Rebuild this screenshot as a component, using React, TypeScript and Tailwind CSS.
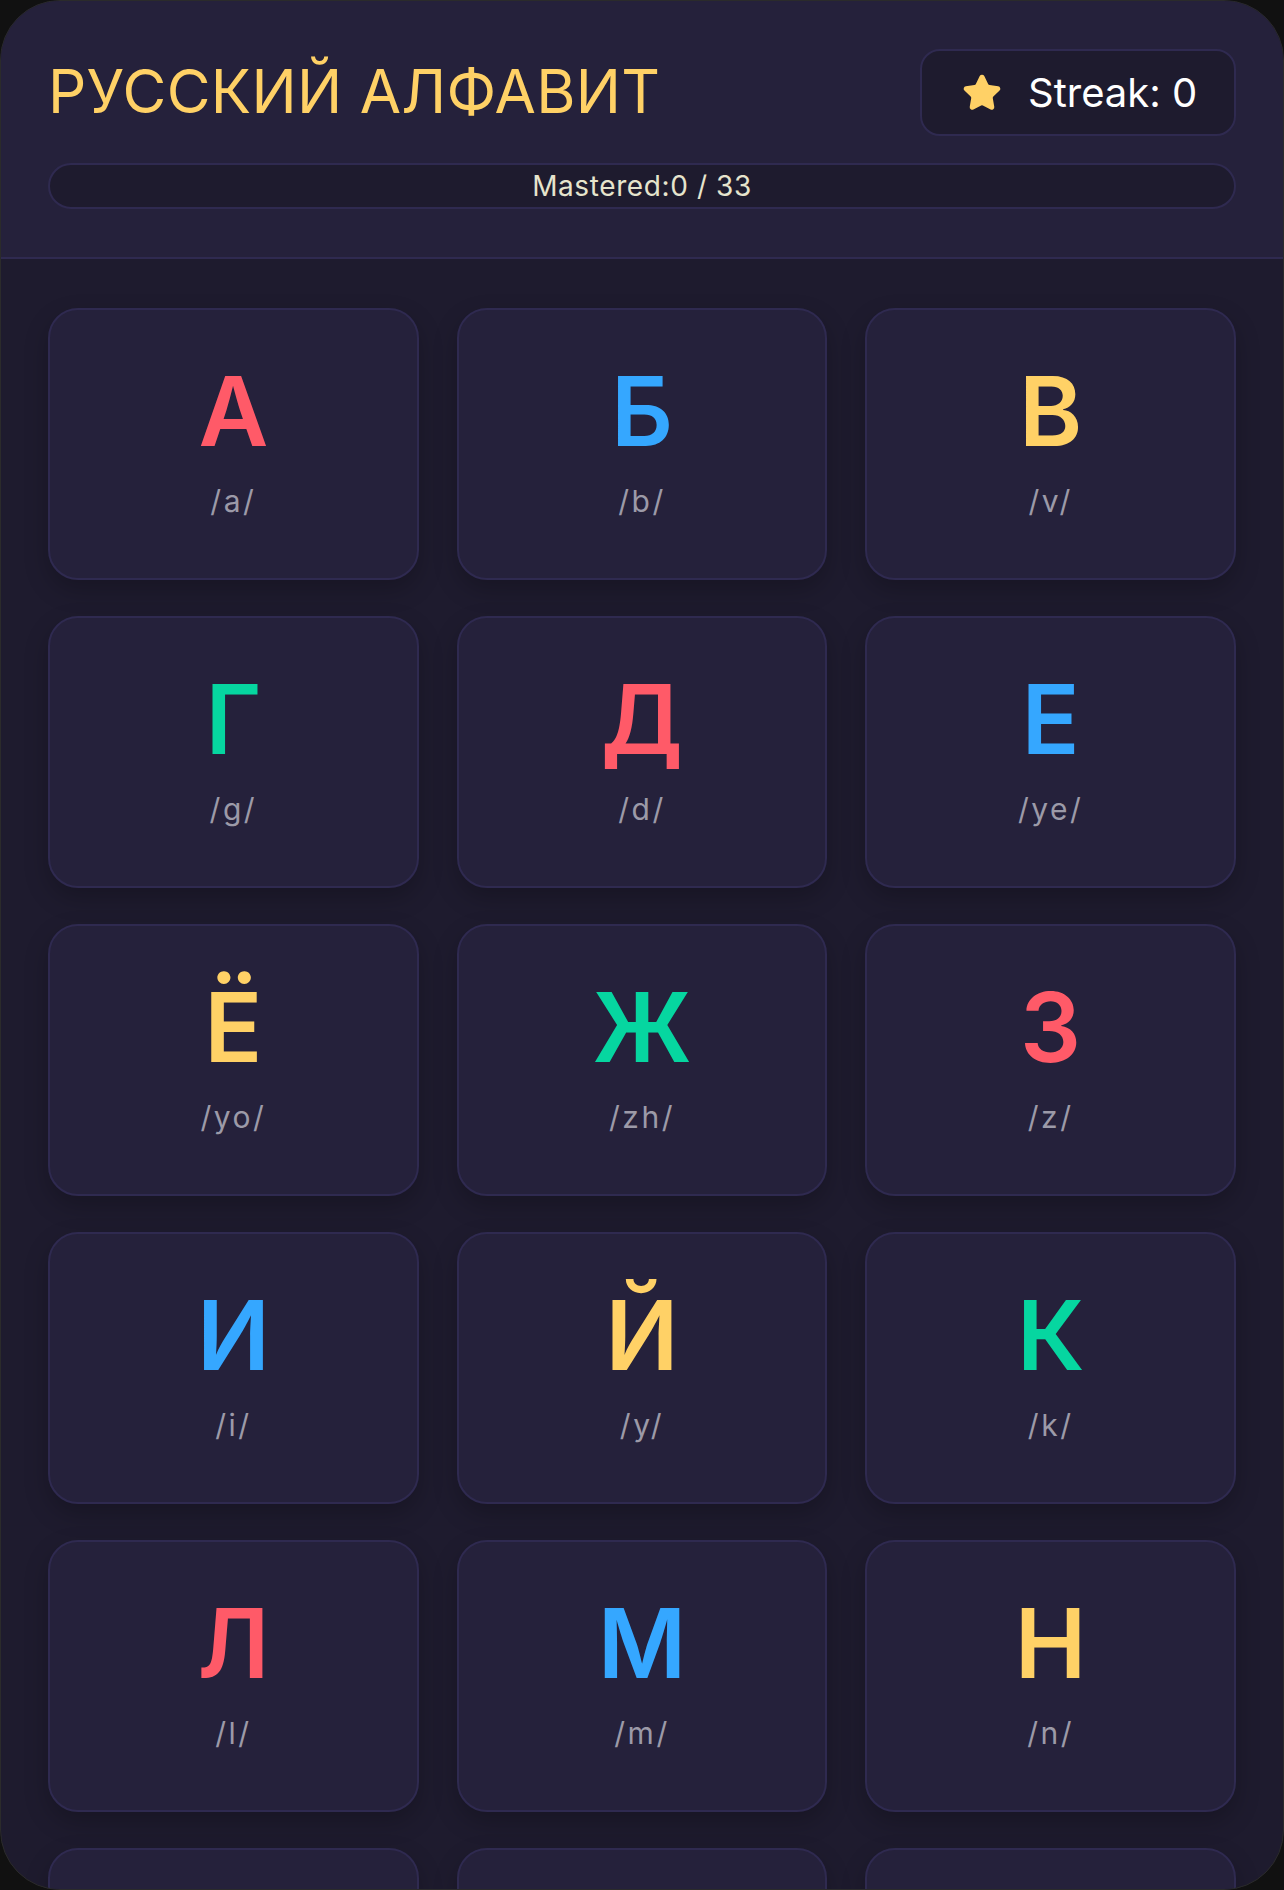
import React from "react";

const letters: [string, string][] = [
  ["А", "a"], ["Б", "b"], ["В", "v"], ["Г", "g"], ["Д", "d"], ["Е", "ye"],
  ["Ё", "yo"], ["Ж", "zh"], ["З", "z"], ["И", "i"], ["Й", "y"], ["К", "k"],
  ["Л", "l"], ["М", "m"], ["Н", "n"], ["О", "o"], ["П", "p"], ["Р", "r"],
  ["С", "s"], ["Т", "t"], ["У", "u"], ["Ф", "f"], ["Х", "kh"], ["Ц", "ts"],
  ["Ч", "ch"], ["Ш", "sh"], ["Щ", "shch"], ["Ъ", "-"], ["Ы", "y"], ["Ь", "'"],
  ["Э", "e"], ["Ю", "yu"], ["Я", "ya"],
];

const colors = ["text-[#ff5a68]", "text-[#35a7ff]", "text-[#ffd166]", "text-[#06d6a0]"];

function Star() {
  return (
    <svg width="40" height="40" viewBox="0 0 24 24" fill="#ffd166" stroke="#ffd166" strokeWidth="2" strokeLinejoin="round" strokeLinecap="round">
      <path d="M11.525 2.295a.53.53 0 0 1 .95 0l2.31 4.679a2.123 2.123 0 0 0 1.595 1.16l5.166.756a.53.53 0 0 1 .294.904l-3.736 3.638a2.123 2.123 0 0 0-.611 1.878l.882 5.14a.53.53 0 0 1-.771.56l-4.618-2.428a2.122 2.122 0 0 0-1.973 0L6.396 21.01a.53.53 0 0 1-.77-.56l.881-5.139a2.122 2.122 0 0 0-.611-1.879L2.16 9.795a.53.53 0 0 1 .294-.906l5.165-.755a2.122 2.122 0 0 0 1.597-1.16z" />
    </svg>
  );
}

export default function App() {
  return (
    <div className="w-[1284px] h-[1890px] bg-[#111111] overflow-hidden font-['Inter','Noto_Sans',sans-serif]">
      <div className="h-full rounded-[60px] border border-[#2b2b2b] bg-[#1e1b2e] overflow-hidden">
        <header className="bg-[#25213b] border-b-2 border-[#2f2a50] px-[47px] pt-[48px] pb-[48px]">
          <div className="flex items-center justify-between h-[87px]">
            <h1 className="text-[60px] leading-none font-normal text-[#ffd166] tracking-[0.3px] mt-[-4px]">
              РУССКИЙ АЛФАВИТ
            </h1>
            <div className="h-[87px] w-[316px] shrink-0 flex items-center gap-[26px] pl-[40px] rounded-[20px] border-2 border-[#2f2a50] bg-[#1e1b2e]">
              <Star />
              <span className="text-[40px] leading-none text-white">Streak: 0</span>
            </div>
          </div>
          <div className="mt-[27px] h-[46px] rounded-full border-2 border-[#2f2a50] bg-[#1e1b2e] flex items-center justify-center">
            <span className="text-[28px] leading-none text-[#e6e4cd] tracking-[0.6px]">Mastered:0 / 33</span>
          </div>
        </header>
        <main className="px-[47px] pt-[49px] grid grid-cols-3 gap-x-[38px] gap-y-[36px]">
          {letters.map(([l, p], i) => (
            <div
              key={i}
              className="h-[272px] rounded-[30px] border-2 border-[#2f2a50] bg-[#25213b] shadow-[0_10px_24px_rgba(0,0,0,0.22)] flex flex-col items-center justify-center pb-[6px]"
            >
              <div className={`text-[96px] leading-none font-semibold ${colors[i % 4]}`}>{l}</div>
              <div className="mt-6 text-[30px] leading-[36px] text-[#9c9aa8] tracking-[2.5px]">/{p}/</div>
            </div>
          ))}
        </main>
      </div>
    </div>
  );
}
